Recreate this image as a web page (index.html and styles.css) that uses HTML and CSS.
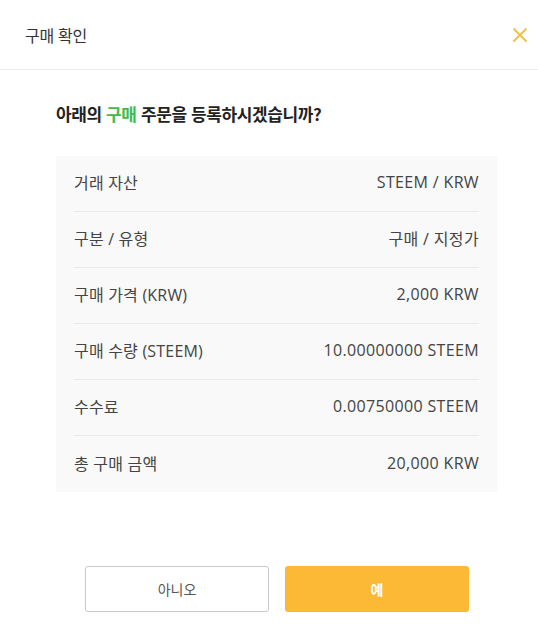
FILE: index.html
```html
<!DOCTYPE html>
<html lang="ko">
<head>
<meta charset="utf-8">
<link rel="stylesheet" href="styles.css">
</head>
<body>
<div class="modal">
  <header class="modal-head">
    <h1 class="modal-title">구매 확인</h1>
    <button class="close" aria-label="닫기">
      <svg width="16" height="16" viewBox="0 0 16 16"><path d="M1.5 1.5 L14.5 14.5 M14.5 1.5 L1.5 14.5" stroke="#f2c04d" stroke-width="2" fill="none"/></svg>
    </button>
  </header>
  <div class="modal-body">
    <p class="question">아래의 <span class="buy">구매</span> 주문을 등록하시겠습니까?</p>
    <dl class="summary">
      <div class="row"><dt>거래 자산</dt><dd>STEEM / KRW</dd></div>
      <div class="row"><dt>구분 / 유형</dt><dd>구매 / 지정가</dd></div>
      <div class="row"><dt>구매 가격 (KRW)</dt><dd>2,000 KRW</dd></div>
      <div class="row"><dt>구매 수량 (STEEM)</dt><dd>10.00000000 STEEM</dd></div>
      <div class="row"><dt>수수료</dt><dd>0.00750000 STEEM</dd></div>
      <div class="row"><dt>총 구매 금액</dt><dd>20,000 KRW</dd></div>
    </dl>
  </div>
  <div class="actions">
    <button class="btn btn-no">아니오</button>
    <button class="btn btn-yes">예</button>
  </div>
</div>
</body>
</html>
```

FILE: styles.css
```css
* { box-sizing: border-box; }
html, body { margin: 0; padding: 0; background: #fff; }
body {
  font-family: "Open Sans", "Noto Sans CJK KR", sans-serif;
  color: #333;
  width: 538px;
  height: 625px;
  overflow: hidden;
}
.modal { display: flex; flex-direction: column; height: 625px; }
.modal-head {
  height: 70px;
  border-bottom: 1px solid #ececec;
  display: flex;
  align-items: center;
  justify-content: space-between;
  padding: 0 10px 0 25px;
}
.modal-title {
  margin: 0;
  font-family: "Noto Sans CJK KR", sans-serif;
  font-size: 16px;
  font-weight: 400;
  color: #333;
  letter-spacing: -0.3px;
}
.close {
  border: 0;
  background: none;
  padding: 0;
  width: 16px;
  height: 16px;
  display: flex;
}
.modal-body { padding: 30px 41px 0 56px; }
.question {
  margin: 0 0 28px;
  font-family: "Noto Sans CJK KR", sans-serif;
  font-weight: 700;
  font-size: 17px;
  letter-spacing: -0.4px;
  color: #222;
  line-height: 28px;
}
.buy { color: #3dbb4c; }
.summary {
  margin: 0;
  background: #f9f9f9;
  padding: 0 18px;
}
.row {
  height: 56px;
  display: flex;
  justify-content: space-between;
  align-items: center;
  border-bottom: 1px solid #e9e9e9;
  font-size: 16px;
  color: #444;
}
.row:last-child { border-bottom: 0; }
.row dt, .row dd { margin: 0; margin-top: -3px; }
.row dt { letter-spacing: 0.2px; }
.row dd { letter-spacing: 0.35px; }
.actions {
  margin-top: auto;
  display: flex;
  gap: 16px;
  padding: 0 0 13px 85px;
}
.btn {
  width: 184px;
  height: 46px;
  border-radius: 3px;
  font-family: "Noto Sans CJK KR", sans-serif;
  font-size: 14px;
}
.btn-no { background: #fff; border: 1px solid #c9c9c9; color: #555; }
.btn-yes { background: #fcb935; border: 0; color: #fff; font-weight: 700; }
```
